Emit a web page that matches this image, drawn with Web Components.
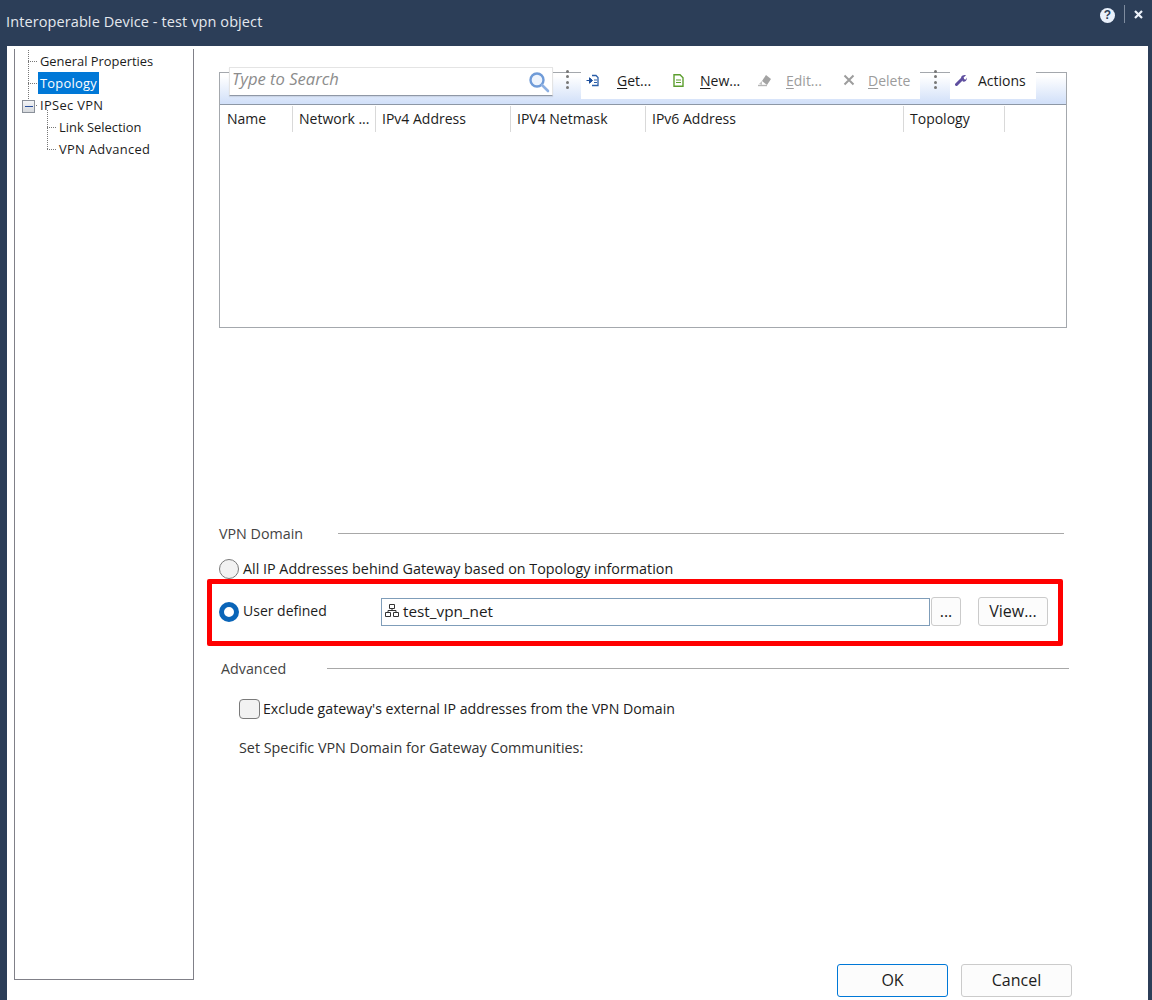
<!DOCTYPE html>
<html>
<head>
<meta charset="utf-8">
<title>Interoperable Device</title>
<style>
  html, body { margin: 0; height: 1000px; overflow: hidden; background: #2c3e58; }
  body { font: 14px "Open Sans", "Noto Sans", sans-serif; color: #1c1c1c; }
</style>
</head>
<body>
<vpn-dialog></vpn-dialog>

<script>
const FONT = '"Open Sans", "Noto Sans", sans-serif';

class TitleBar extends HTMLElement {
  connectedCallback() {
    this.attachShadow({ mode: 'open' });
    this.shadowRoot.innerHTML = `
      <style>
        :host { display: flex; height: 46px; background: #2c3e58; color: #e4e8ee; box-sizing: border-box; padding: 12px 9px 0 6px; font-size: 14.5px; line-height: 20px; }
        .title { flex: 1; letter-spacing: 0.1px; }
        .tools { display: flex; align-items: flex-start; margin-top: -12px; padding-top: 5px; }
        .help { width: 15px; height: 15px; margin-top: 3px; border-radius: 50%; background: #e9f0fb; color: #2c3e58; font: bold 12px/15px "Liberation Sans", sans-serif; text-align: center; }
        .sep { width: 1px; height: 18px; background: #7f8c9f; margin: 0 9px; }
        svg { margin-top: 5px; }
      </style>
      <div class="title">Interoperable Device - test vpn object</div>
      <div class="tools">
        <div class="help">?</div>
        <div class="sep"></div>
        <svg width="9" height="9" viewBox="0 0 9 9"><path d="M1 1l7 7M8 1l-7 7" stroke="#eef3fb" stroke-width="2.2"/></svg>
      </div>`;
  }
}
customElements.define('title-bar', TitleBar);

// one tree line, level 0 or 1, "selected" and "expander" are attributes
class TreeRow extends HTMLElement {
  connectedCallback() {
    this.attachShadow({ mode: 'open' });
    this.shadowRoot.innerHTML = `
      <style>
        :host { display: block; position: relative; height: 22px; line-height: 22px; padding-left: 24px; white-space: nowrap; font-size: 12.9px; }
        :host([level="1"]) { padding-left: 43px; }
        span { display: inline-block; height: 22px; padding: 0 2px 0 1px; }
        :host([selected]) span { background: #0078d7; color: #fff; padding: 0 2px; margin-left: -1px; }
        .h { position: absolute; left: 13px; top: 11px; width: 9px; border-top: 1px dotted #777; }
        :host([level="1"]) .h { left: 32px; }
        .v { position: absolute; left: 13px; top: -11px; height: 22px; border-left: 1px dotted #777; }
        :host([level="1"]) .v { left: 32px; }
        :host([first]) .v { top: 0; height: 11px; }
        :host([start]) .v { top: -6px; height: 17px; }
        .box { position: absolute; left: 7px; top: 6px; width: 11px; height: 11px; border: 1px solid #8a9099; background: linear-gradient(#f4f5f7, #d5d8dc); }
        .box::after { content: ""; position: absolute; left: 2px; right: 1px; top: 5px; height: 1px; background: #2a4f9c; }
      </style>
      <div class="v"></div><div class="h"></div>
      ${this.hasAttribute('expander') ? '<div class="box"></div>' : ''}
      <span><slot></slot></span>`;
  }
}
customElements.define('tree-row', TreeRow);

class NavTree extends HTMLElement {
  connectedCallback() {
    this.attachShadow({ mode: 'open' });
    this.shadowRoot.innerHTML = `
      <style>
        :host { display: block; box-sizing: border-box; width: 180px; height: 931px; margin: 3px 0 0 7px; padding-top: 1px; border: 1px solid #808088; border-top: 0; background: #fff; }
      </style>
      <tree-row first>General Properties</tree-row>
      <tree-row selected style="letter-spacing:.25px">Topology</tree-row>
      <tree-row expander style="letter-spacing:.33px">IPSec VPN</tree-row>
      <tree-row level="1" start>Link Selection</tree-row>
      <tree-row level="1" style="letter-spacing:.33px">VPN Advanced</tree-row>`;
  }
}
customElements.define('nav-tree', NavTree);

class ToolBtn extends HTMLElement {
  connectedCallback() {
    this.attachShadow({ mode: 'open' });
    const w = this.getAttribute('w'), t = this.getAttribute('t');
    this.shadowRoot.innerHTML = `
      <style>
        :host { display: flex; align-items: center; height: 16px; box-sizing: border-box; white-space: nowrap; width: ${w}px; }
        :host([disabled]) { color: #9c9c9c; }
        .ic { width: ${t}px; flex: none; display: flex; align-items: center; }
      </style>
      <div class="ic"><slot name="icon"></slot></div>
      <div><slot></slot></div>`;
  }
}
customElements.define('tool-btn', ToolBtn);

class Kebab extends HTMLElement {
  connectedCallback() {
    this.attachShadow({ mode: 'open' });
    this.shadowRoot.innerHTML = `
      <style>
        :host { display: flex; flex-direction: column; align-items: center; gap: 2.3px; box-sizing: border-box; padding-top: 2px; }
        i { width: 3px; height: 3px; border-radius: 50%; background: #777; }
      </style>
      <i></i><i></i><i></i><i></i>`;
  }
}
customElements.define('tool-kebab', Kebab);

class SearchBox extends HTMLElement {
  connectedCallback() {
    this.attachShadow({ mode: 'open' });
    this.shadowRoot.innerHTML = `
      <style>
        :host { display: flex; align-items: center; box-sizing: border-box; width: 324px; height: 29px; margin-top: -6px; padding: 0 1px 0 2px; background: #fff; border: 1px solid #e4e4e4; border-bottom: 1px solid #8f98a6; box-shadow: 0 1px 1px rgba(0,0,0,.08); }
        span { flex: 1; font-style: italic; color: #8c8c8c; font-size: 16.6px; margin-top: -6px; }
      </style>
      <span>Type to Search</span>
      <svg width="24" height="24" viewBox="0 0 24 24"><circle cx="10" cy="10" r="6.5" fill="#eef4fd" stroke="#6f9bd8" stroke-width="2.4"/><path d="M15 15l6 6" stroke="#8db0e2" stroke-width="2.6" stroke-linecap="round"/></svg>`;
  }
}
customElements.define('search-box', SearchBox);

class DataPanel extends HTMLElement {
  connectedCallback() {
    this.attachShadow({ mode: 'open' });
    const cols = [['Name', 73], ['Network ...', 83], ['IPv4 Address', 135], ['IPV4 Netmask', 135], ['IPv6 Address', 258], ['Topology', 101]];
    this.shadowRoot.innerHTML = `
      <style>
        :host { display: block; box-sizing: border-box; width: 848px; height: 256px; border: 1px solid #a4a8ad; background: #fff; }
        .bar { display: flex; height: 31px; padding-left: 9px; background: linear-gradient(#fff 10%, #d3e1f9 95%); border-bottom: 1px solid #8d97a5; }
        .kb1 { width: 28px; margin-top: -5px; }
        .kb2 { width: 30px; margin-top: -5px; }
        .group { display: flex; align-items: flex-start; background: #fff; height: 27px; margin-top: -1px; padding-top: 0; }
        .g1 { width: 339px; padding-left: 5px; box-sizing: border-box; }
        .g2 { width: 86px; padding-left: 5px; box-sizing: border-box; }
        .head { display: flex; height: 28px; }
        .head div { box-sizing: border-box; padding: 0 0 0 6px; line-height: 25px; border-right: 1px solid #d9d9d9; height: 26px; margin-top: 1px; white-space: nowrap; overflow: hidden; }
        .head div:first-child { padding-left: 7px; }
        u { text-underline-offset: 2px; }
        tool-btn svg { display: block; }
      </style>
      <div class="bar">
        <search-box></search-box>
        <tool-kebab class="kb1"></tool-kebab>
        <div class="group g1">
          <tool-btn w="87" t="31"><svg slot="icon" width="13" height="13" viewBox="0 0 13 13"><path d="M6 1.5h4l2 2v8H6" fill="none" stroke="#2a5ea8" stroke-width="1.3"/><path d="M0.5 6.5h5M3.5 3.8l3 2.7-3 2.7z" fill="#1d4f9c" stroke="#1d4f9c"/><path d="M8 6h3M8 8.5h3" stroke="#2a5ea8"/></svg><u>G</u>et...</tool-btn>
          <tool-btn w="84" t="27"><svg slot="icon" width="11" height="13" viewBox="0 0 11 13"><path d="M1 .8h6l3 3v8.4H1z" fill="#fff" stroke="#5c9e2e" stroke-width="1.4"/><path d="M3 6h5M3 8.5h5" stroke="#5c9e2e"/></svg><u>N</u>ew...</tool-btn>
          <tool-btn w="86" t="29" disabled><svg slot="icon" width="15" height="13" viewBox="0 0 15 13"><path d="M5 7l4-6 5 4-4 6z" fill="#a3a3a3"/><path d="M1 11.5h9" stroke="#b5b5b5" stroke-width="1.4"/><path d="M5 7l-3 3 3 1z" fill="#c4c4c4"/></svg><u>E</u>dit...</tool-btn>
          <tool-btn w="77" t="25" disabled><svg slot="icon" width="12" height="12" viewBox="0 0 12 12"><path d="M1.5 1.5l9 9M10.5 1.5l-9 9" stroke="#9d9d9d" stroke-width="2"/></svg><u>D</u>elete</tool-btn>
        </div>
        <tool-kebab class="kb2"></tool-kebab>
        <div class="group g2">
          <tool-btn w="81" t="23"><svg slot="icon" width="12" height="13" viewBox="0 0 12 13"><path d="M7 5L1.5 10.5" stroke="#5f4f9f" stroke-width="3" stroke-linecap="round"/><path d="M6 3.2C7 1 9.5.6 11 1.2L8.6 3.6l.6 1.6 1.6.4 1-2.2c.4 2.2-1 4.6-4 4.2z" fill="#5f4f9f"/></svg>Actions</tool-btn>
        </div>
      </div>
      <div class="head">${cols.map(c => `<div style="width:${c[1]}px">${c[0]}</div>`).join('')}</div>`;
  }
}
customElements.define('data-panel', DataPanel);

class SectionHead extends HTMLElement {
  connectedCallback() {
    this.attachShadow({ mode: 'open' });
    const label = this.getAttribute('label'), lw = this.getAttribute('lw');
    this.shadowRoot.innerHTML = `
      <style>
        :host { display: flex; align-items: center; height: 20px; color: #444; font-size: 14.3px; }
        .l { width: ${lw}px; flex: none; }
        .r { flex: 1; height: 1px; background: #a8a8a8; }
      </style>
      <div class="l">${label}</div><div class="r"></div>`;
  }
}
customElements.define('section-head', SectionHead);

class RadioOpt extends HTMLElement {
  connectedCallback() {
    this.attachShadow({ mode: 'open' });
    this.shadowRoot.innerHTML = `
      <style>
        :host { display: flex; align-items: center; gap: 4px; white-space: nowrap; }
        .dot { width: 20px; height: 20px; box-sizing: border-box; flex: none; border-radius: 50%; background: #f2f2f2; border: 1px solid #7a7a7a; }
        :host([checked]) .dot { background: #fff; border: 5.5px solid #0a65b8; }
      </style>
      <div class="dot"></div><slot></slot>`;
  }
}
customElements.define('radio-opt', RadioOpt);

class PushBtn extends HTMLElement {
  connectedCallback() {
    this.attachShadow({ mode: 'open' });
    this.shadowRoot.innerHTML = `
      <style>
        :host { display: flex; align-items: center; justify-content: center; box-sizing: border-box; flex: none; padding-bottom: 2px; background: #fcfcfc; border: 1px solid #cbcbcb; border-radius: 3px; color: #1c1c1c; font-size: 16px; }
        :host([primary]) { border-color: #0078d7; }
      </style>
      <slot></slot>`;
  }
}
customElements.define('push-btn', PushBtn);

class DomainPicker extends HTMLElement {
  connectedCallback() {
    this.attachShadow({ mode: 'open' });
    this.shadowRoot.innerHTML = `
      <style>
        :host { display: flex; align-items: center; box-sizing: border-box; height: 67px; width: 856px; margin-left: -12px; padding: 0 0 2px 7px; border: 5px solid #f00; border-radius: 2px; }
        radio-opt { width: 162px; flex: none; }
        radio-opt span { margin-top: -2px; }
        .input { display: flex; align-items: center; gap: 4px; box-sizing: border-box; width: 549px; height: 28px; padding-left: 3px; border: 1px solid #7f9db9; font-size: 15.3px; }
        .input span { margin-top: -2px; }
        .input svg { margin-top: -2px; }
        .dots { width: 30px; height: 29px; margin-left: 1px; }
        .view { width: 70px; height: 29px; margin-left: 17px; }
      </style>
      <radio-opt checked><span>User defined</span></radio-opt>
      <div class="input">
        <svg width="14" height="13" viewBox="0 0 14 13"><path d="M4.5.5h5v4h-5zM.5 8.5h5v4h-5zM8.5 8.5h5v4h-5z" fill="#fff" stroke="#333"/><path d="M7 4.5v2M3 8.5v-2h8v2" fill="none" stroke="#333"/></svg>
        <span>test_vpn_net</span>
      </div>
      <push-btn class="dots">...</push-btn>
      <push-btn class="view">View...</push-btn>`;
  }
}
customElements.define('domain-picker', DomainPicker);

class TopologyPage extends HTMLElement {
  connectedCallback() {
    this.attachShadow({ mode: 'open' });
    this.shadowRoot.innerHTML = `
      <style>
        :host { display: flex; flex-direction: column; flex: 1; min-width: 0; padding: 26px 0 3px 25px; box-sizing: border-box; height: 954px; }
        .vpn { margin-top: 195px; width: 845px; }
        .all { height: 21px; margin-top: 15px; font-size: 14.33px; }
        .adv { margin: 12px 0 0 2px; width: 848px; }
        .check { display: flex; align-items: center; gap: 3px; height: 21px; margin: 20px 0 0 20px; font-size: 14.17px; }
        .box { width: 21px; height: 20px; box-sizing: border-box; background: #f2f2f2; border: 1px solid #7a7a7a; border-radius: 4px; }
        .set { height: 20px; line-height: 20px; margin: 19px 0 0 20px; color: #333; font-size: 14.33px; }
        .foot { margin-top: auto; display: flex; gap: 13px; margin-left: 618px; }
        .foot push-btn { width: 111px; height: 33px; }
      </style>
      <data-panel></data-panel>
      <section-head class="vpn" label="VPN Domain" lw="119"></section-head>
      <radio-opt class="all">All IP Addresses behind Gateway based on Topology information</radio-opt>
      <domain-picker></domain-picker>
      <section-head class="adv" label="Advanced" lw="106"></section-head>
      <div class="check"><div class="box"></div><span>Exclude gateway's external IP addresses from the VPN Domain</span></div>
      <div class="set">Set Specific VPN Domain for Gateway Communities:</div>
      <div class="foot"><push-btn primary>OK</push-btn><push-btn>Cancel</push-btn></div>`;
  }
}
customElements.define('topology-page', TopologyPage);

class VpnDialog extends HTMLElement {
  connectedCallback() {
    this.attachShadow({ mode: 'open' });
    this.shadowRoot.innerHTML = `
      <style>
        :host { display: block; height: 1000px; font: 14px ${FONT}; color: #1c1c1c; }
        .body { display: flex; height: 954px; margin: 0 4px 0 7px; background: #fff; }
      </style>
      <title-bar></title-bar>
      <div class="body">
        <nav-tree></nav-tree>
        <topology-page></topology-page>
      </div>`;
  }
}
customElements.define('vpn-dialog', VpnDialog);
</script>
</body>
</html>
